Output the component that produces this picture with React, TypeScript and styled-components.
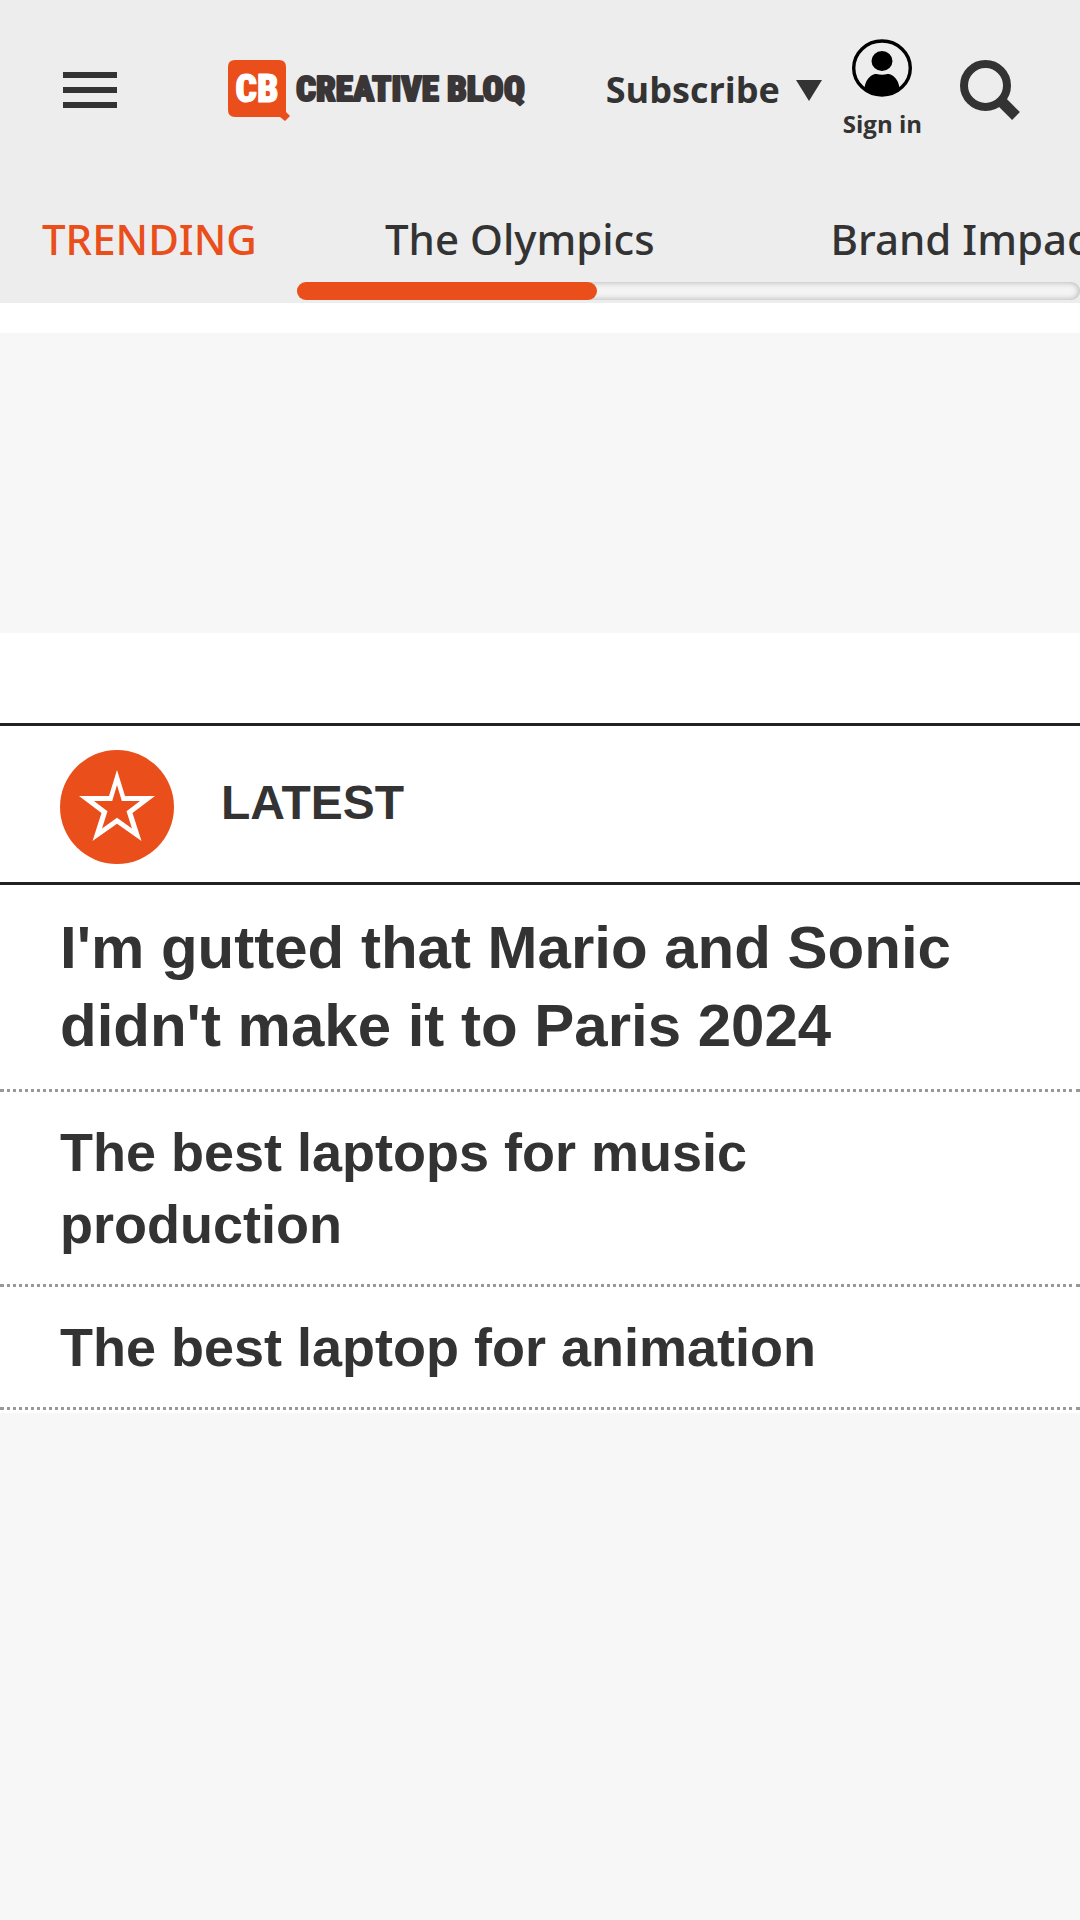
import React from "react";
import styled, { createGlobalStyle } from "styled-components";

const ink = "#333333";
const orange = "#ea4e1b";
const pale = "#f7f7f7";

const GlobalStyle = createGlobalStyle`
  *, *::before, *::after { box-sizing: border-box; }
  html, body, #root { min-height: 100vh; }
  body { margin: 0; background: #fff; color: ${ink}; font-family: "Liberation Sans", Arial, sans-serif; overflow-x: hidden; }
  #root { display: flex; flex-direction: column; }
  h2, h3, ul { margin: 0; padding: 0; }
  ul { list-style: none; }
  a { color: inherit; text-decoration: none; }
  button { margin: 0; padding: 0; border: 0; background: none; color: inherit; cursor: pointer; }
  svg { display: block; flex: none; }
`;

const Page = styled.div`
  flex: 1;
  display: flex;
  flex-direction: column;
`;

const Header = styled.header`
  background: #ededed;
  font-family: "Open Sans", sans-serif;
`;

const TopBar = styled.div`
  display: flex;
  align-items: center;
  height: 180px;
  padding: 0 60px;
`;

const IconButton = styled.button`
  display: flex;
  align-items: center;
  justify-content: center;
  width: 60px;
  height: 60px;
`;

const LogoLink = styled.a`
  margin: 0 auto 0 108px;
`;

const Actions = styled.div`
  display: flex;
  align-items: center;
  gap: 20px;
`;

const SubscribeButton = styled.button`
  display: flex;
  align-items: center;
  gap: 15px;
  font: 700 36px/48px "Open Sans", sans-serif;
`;

const SignIn = styled.a`
  display: flex;
  flex-direction: column;
  align-items: center;
  gap: 9px;
  margin-right: 18px;
  font-size: 24px;
  line-height: 36px;
  font-weight: 700;
`;

const Trending = styled.nav`
  display: flex;
  height: 123px;
  font-family: "Noto Sans", "Open Sans", sans-serif;
  font-size: 42px;
  line-height: 58px;
  font-weight: 500;
`;

const TrendingLabel = styled.span`
  flex: none;
  width: 297px;
  padding: 30px 0 0 42px;
  color: ${orange};
`;

const TrendingScroller = styled.div`
  flex: 1;
  min-width: 0;
  display: flex;
  flex-direction: column;
  justify-content: space-between;
  padding: 30px 0 3px;
`;

const TrendingList = styled.ul`
  display: flex;
  overflow: hidden;
  white-space: nowrap;
`;

const TrendingItem = styled.li`
  flex: none;
  padding: 0 88px;
`;

const Track = styled.div`
  height: 18px;
  border-radius: 9px;
  background: #f4f4f4;
  box-shadow: inset 0 0 6px rgba(0, 0, 0, 0.3);
`;

const Thumb = styled.div`
  width: 300px;
  height: 18px;
  border-radius: 9px;
  background: ${orange};
`;

const AdSlot = styled.aside`
  height: 300px;
  margin: 30px 0 90px;
  background: ${pale};
`;

const SectionHead = styled.div`
  display: flex;
  align-items: center;
  gap: 47px;
  height: 162px;
  padding: 6px 60px 0;
  border-top: 3px solid #222;
  border-bottom: 3px solid #222;
`;

const SectionTitle = styled.h2`
  padding-bottom: 9px;
  font-size: 48px;
  line-height: 60px;
`;

const Story = styled.li<{ $lead?: boolean }>`
  padding: 24px 60px;
  border-bottom: 3px dotted #999;
  font-size: ${(p) => (p.$lead ? 60 : 54)}px;
  line-height: ${(p) => (p.$lead ? 78 : 72)}px;
`;

const StoryTitle = styled.h3`
  font-size: inherit;
  line-height: inherit;
`;

const Filler = styled.aside`
  flex: 1;
  margin-top: 3px;
  background: ${pale};
`;

const MenuIcon = () => (
  <svg width="54" height="36" viewBox="0 0 54 36" aria-hidden="true">
    <path d="M0 0h54v6H0zM0 15h54v6H0zM0 30h54v6H0z" fill={ink} />
  </svg>
);

const Logo = () => (
  <svg width="302" height="66" viewBox="0 0 302 66" role="img" aria-label="Creative Bloq">
    <path d="M7 3h44q7 0 7 7v45l4 4-5 5-5-4H7q-7 0-7-7V10q0-7 7-7z" fill={orange} />
    <g fontWeight="900" strokeLinejoin="round" fontFamily='"Roboto Condensed", "Liberation Sans Narrow", sans-serif'>
      <text x="29" y="45" fontSize="38" textAnchor="middle" fill="#fff" stroke="#fff">CB</text>
      <text x="68" y="44" fontSize="35" fill="#3a3637" stroke="#3a3637" strokeWidth="2">CREATIVE BLOQ</text>
    </g>
  </svg>
);

const CaretIcon = () => (
  <svg width="28" height="22" viewBox="0 0 28 22" aria-hidden="true">
    <path d="M1 1h26L14 22z" fill={ink} />
  </svg>
);

const UserIcon = () => (
  <svg width="60" height="58" viewBox="0 0 60 58" aria-hidden="true">
    <ellipse cx="30" cy="29" rx="28.300" ry="27" fill="none" stroke="#000" strokeWidth="3.400" />
    <ellipse cx="30" cy="22" rx="10.500" ry="10" fill="#000" />
    <path d="M12.500 49c1-7 4-11 8-13q2-1.500 4-1q5.500 1.500 11 0q2-.5 4 1c4 2 7 6 8 13q-7 8-17.500 8t-17.500-8z" fill="#000" />
  </svg>
);

const SearchIcon = () => (
  <svg width="60" height="60" viewBox="0 0 60 60" aria-hidden="true">
    <circle cx="25.500" cy="25.500" r="21.500" fill="none" stroke={ink} strokeWidth="8" />
    <path d="M39 39L56 56" stroke={ink} strokeWidth="11" />
  </svg>
);

const StarIcon = () => (
  <svg width="114" height="114" viewBox="0 0 114 114" aria-hidden="true">
    <circle cx="57" cy="57" r="57" fill={orange} />
    <path
      fill="#fff"
      fillRule="evenodd"
      d="M57 20L65 46H95L72.500 63L81.500 91L57 73.700L32.500 91L41.500 63L19 46H49ZM57 35L52.200 51H34L47.500 61.200L42 78.500L57 67.800L72 78.500L66.500 61.200L80 51H61.800Z"
    />
  </svg>
);

const topics = ["The Olympics", "Brand Impact Awards"];
const stories = [
  "I'm gutted that Mario and Sonic didn't make it to Paris 2024",
  "The best laptops for music production",
  "The best laptop for animation",
];

export default function App() {
  return (
    <Page>
      <GlobalStyle />
      <Header>
        <TopBar>
          <IconButton aria-label="Open menu"><MenuIcon /></IconButton>
          <LogoLink href="#home"><Logo /></LogoLink>
          <Actions>
            <SubscribeButton>Subscribe <CaretIcon /></SubscribeButton>
            <SignIn href="#account"><UserIcon />Sign in</SignIn>
            <IconButton aria-label="Search"><SearchIcon /></IconButton>
          </Actions>
        </TopBar>
        <Trending aria-label="Trending">
          <TrendingLabel>TRENDING</TrendingLabel>
          <TrendingScroller>
            <TrendingList>
              {topics.map((t) => (
                <TrendingItem key={t}><a href="#topic">{t}</a></TrendingItem>
              ))}
            </TrendingList>
            <Track><Thumb /></Track>
          </TrendingScroller>
        </Trending>
      </Header>
      <AdSlot />
      <main>
        <SectionHead>
          <StarIcon />
          <SectionTitle>LATEST</SectionTitle>
        </SectionHead>
        <ul>
          {stories.map((s, i) => (
            <Story key={s} $lead={i === 0}>
              <StoryTitle><a href="#story">{s}</a></StoryTitle>
            </Story>
          ))}
        </ul>
      </main>
      <Filler />
    </Page>
  );
}
